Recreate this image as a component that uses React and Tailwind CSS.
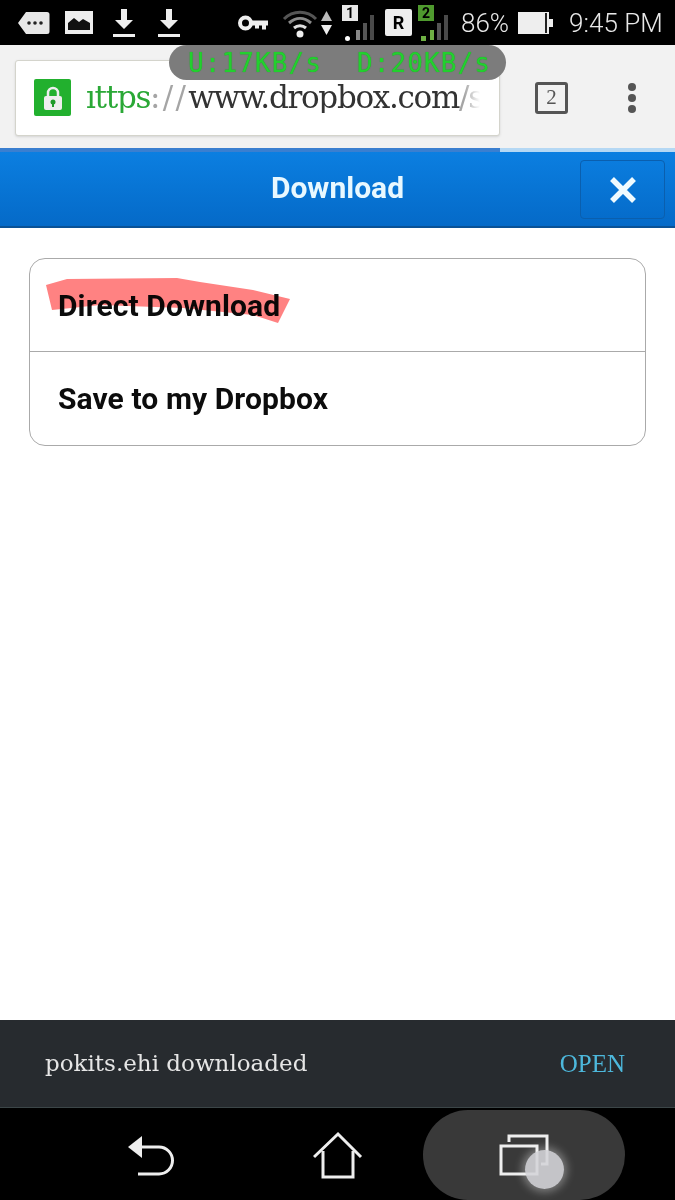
import React from "react";

function Bars({ tint }) {
    return (
        <svg width="20" height="30" viewBox="0 0 20 30">
            <rect x="0" y="17" width="4" height="10" fill={tint} />
            <rect x="7" y="10" width="4" height="17" fill="#555" />
            <rect x="14" y="2" width="4" height="25" fill="#4a4a4a" />
        </svg>
    );
}

function StatusBar() {
    return (
        <div className="h-[45px] bg-black flex items-center shrink-0 text-[#e8e8e8] font-['Roboto',sans-serif]">
            {/* notification bubble */}
            <svg className="ml-[18px]" width="32" height="24" viewBox="0 0 32 24">
                <path d="M8 1h21a2.500 2.500 0 0 1 2.500 2.500v17a2.500 2.500 0 0 1-2.500 2.500H8L0 12z" fill="#e8e8e8" />
                <circle cx="11" cy="12" r="1.800" fill="#222" />
                <circle cx="17" cy="12" r="1.800" fill="#222" />
                <circle cx="23" cy="12" r="1.800" fill="#222" />
            </svg>
            {/* picture */}
            <svg className="ml-[15px]" width="28" height="23" viewBox="0 0 28 23">
                <rect width="28" height="23" fill="#eee" />
                <path d="M3 19V12l6-5 5 4 4-3 7 4v7z" fill="#111" />
            </svg>
            <DownloadIcon className="ml-5" />
            <DownloadIcon className="ml-[23px]" />
            {/* key */}
            <svg className="ml-[58px]" width="30" height="16" viewBox="0 0 30 16">
                <circle cx="7.500" cy="8" r="5.500" fill="none" stroke="#eee" strokeWidth="4" />
                <path d="M13 5.500h17v5h-2v4h-4v-4h-3v3h-4v-3h-4z" fill="#eee" />
            </svg>
            {/* wifi */}
            <svg className="ml-[14px]" width="36" height="30" viewBox="0 0 36 30">
                <path d="M2 11C11 2 25 2 34 11" fill="none" stroke="#555" strokeWidth="3" />
                <path d="M7 15C14 9 22 9 29 15" fill="none" stroke="#8a8a8a" strokeWidth="3" />
                <path d="M12 20C15.500 17 20.500 17 24 20" fill="none" stroke="#ddd" strokeWidth="3" />
                <circle cx="18" cy="26" r="3.500" fill="#eee" />
            </svg>
            {/* up down arrows */}
            <svg className="ml-[3px]" width="11" height="24" viewBox="0 0 11 24">
                <path d="M5.500 0L11 10H0z" fill="#bbb" />
                <path d="M5.500 24L0 14h11z" fill="#eee" />
            </svg>
            <div className="ml-[10px] relative w-[34px] h-[36px]">
                <div className="absolute left-0 top-0 w-4 h-[16px] bg-[#e8e8e8] text-black text-[14px] leading-[16px] font-bold text-center">1</div>
                <div className="absolute left-[14px] top-[8px]">
                    <Bars tint="#888" />
                </div>
                <div className="absolute left-[3px] top-[31px] w-[5px] h-[5px] rounded-full bg-white"></div>
            </div>
            <div className="ml-[9px] w-[27px] h-[27px] rounded-[2px] bg-[#eee] text-black text-[18px] font-bold flex items-center justify-center">R</div>
            <div className="ml-[6px] relative w-[34px] h-[36px]">
                <div className="absolute left-0 top-0 w-4 h-[16px] bg-[#4f9a2e] text-black text-[14px] leading-[16px] font-bold text-center">2</div>
                <div className="absolute left-[12px] top-[8px]">
                    <Bars tint="#6fb044" />
                </div>
                <div className="absolute left-[3px] top-[31px] w-[5px] h-[5px] bg-[#6fb044]"></div>
            </div>
            <span className="ml-[9px] text-[26px] leading-none font-light">86%</span>
            {/* battery */}
            <svg className="ml-[9px]" width="35" height="22" viewBox="0 0 35 22">
                <rect y="0" width="31" height="22" fill="#eee" />
                <rect x="27" y="1" width="2" height="20" fill="#222" />
                <rect x="31" y="7" width="4" height="8" fill="#eee" />
            </svg>
            <span className="ml-4 text-[26px] leading-none font-light">9:45 PM</span>
        </div>
    );
}

function DownloadIcon({ className }) {
    return (
        <svg className={className} width="22" height="28" viewBox="0 0 22 28">
            <path d="M8 0h6v11h6L11 20 2 11h6z" fill="#eee" />
            <rect y="25" width="22" height="3" fill="#eee" />
        </svg>
    );
}

function AddressBar() {
    return (
        <div className="h-[103px] bg-[#f2f2f2] flex items-center shrink-0 relative">
            <div className="ml-[15px] mt-[2px] w-[485px] h-[76px] bg-white border border-[#d4d4cc] rounded-[3px] shadow-sm flex items-center overflow-hidden">
                <div className="ml-[18px] w-[37px] h-[37px] rounded-[2px] bg-[#22b02e] flex items-center justify-center shrink-0">
                    <svg width="20" height="24" viewBox="0 0 20 24">
                        <path d="M5 11V7a5 5 0 0 1 10 0v4" fill="none" stroke="#eee" strokeWidth="2.500" />
                        <rect x="1" y="10" width="18" height="14" rx="2" fill="#eee" />
                        <circle cx="10" cy="16" r="2.500" fill="#1f9a2a" />
                        <rect x="9" y="17" width="2" height="4" fill="#1f9a2a" />
                    </svg>
                </div>
                <div className="ml-[15px] text-[31px] leading-none font-['DejaVu_Serif',serif] whitespace-nowrap overflow-hidden w-[394px] tracking-[-1.300px] [mask-image:linear-gradient(to_right,black_96%,transparent)]">
                    <span className="text-[#2aa836]">ıttps</span>
                    <span className="text-[#a5a5a5] tracking-[2.300px]">://</span>
                    <span className="text-[#333]">www.dropbox.com</span>
                    <span className="text-[#a5a5a5]">/s</span>
                </div>
            </div>
            <div className="ml-[35px] mt-[2px] w-[33px] h-[32px] border-[3px] border-[#555] rounded-[3px] flex items-center justify-center text-[#555] text-[21px] font-['Liberation_Serif',serif]">2</div>
            <div className="ml-[60px] mt-[2px] flex flex-col gap-[3px]">
                <div className="w-2 h-2 rounded-full bg-[#555]"></div>
                <div className="w-2 h-2 rounded-full bg-[#555]"></div>
                <div className="w-2 h-2 rounded-full bg-[#555]"></div>
            </div>
            {/* network speed overlay */}
            <div className="absolute left-[169px] top-0 w-[337px] h-[35px] rounded-full bg-[#7c7c7c] flex items-center text-[#22d02e] text-[26px] leading-none font-['DejaVu_Sans_Mono',monospace] whitespace-nowrap tracking-[1.100px] [text-shadow:0_0_1px_#1a9a22]">
                <span className="ml-[19px]">U:17KB/s</span>
                <span className="ml-[35px]">D:20KB/s</span>
            </div>
        </div>
    );
}

function Header() {
    return (
        <div className="h-[80px] shrink-0 relative border-b-2 border-[#0a5296] bg-gradient-to-b from-[#0c80e2] to-[#056ac8] flex items-center justify-center">
            <div className="absolute left-0 top-0 w-[500px] h-[4px] bg-[#3a7fd0]"></div>
            <div className="absolute left-[500px] right-0 top-0 h-[4px] bg-[#b5d8f4]"></div>
            <span className="mt-[2px] text-[#e8f8ff] text-[30px] leading-none font-bold font-['Roboto',sans-serif]">Download</span>
            <button className="absolute left-[580px] top-[12px] w-[85px] h-[59px] rounded-[4px] border border-[#0a5fae] flex items-center justify-center">
                <svg width="28" height="28" viewBox="0 0 28 28">
                    <path d="M3 3l22 22M25 3L3 25" stroke="#f0fbff" strokeWidth="5.500" />
                </svg>
            </button>
        </div>
    );
}

function OptionsCard() {
    return (
        <div className="mx-[29px] mt-[30px] border-[1.500px] border-[#aaa] rounded-[16px] font-['Roboto',sans-serif] text-[#0c0c0c] text-[30px] font-bold tracking-[0.1px]">
            <div className="relative h-[93px] flex items-center px-[28px] border-b border-[#aaa]">
                <span>Direct Download</span>
                {/* marker scribble on top of the text */}
                <svg className="absolute left-0 top-0 mix-blend-multiply" width="300" height="90" viewBox="0 0 300 90">
                    <path d="M16 26L37 20 147 19 170 23 223 31 260 40 248 64 223 56 153 49 70 46 22 51z" fill="#ff8282" />
                </svg>
            </div>
            <div className="h-[93px] flex items-center px-[28px]">Save to my Dropbox</div>
        </div>
    );
}

function Toast() {
    return (
        <div className="mt-auto h-[88px] shrink-0 bg-[#272b2f] border-b border-[#3c4648] flex items-center justify-between pl-[45px] pr-[50px]">
            <span className="text-[#e6e6e6] text-[23px] font-['DejaVu_Serif',serif]">pokits.ehi downloaded</span>
            <span className="text-[#4db8dc] text-[25px] font-['Liberation_Serif',serif]">OPEN</span>
        </div>
    );
}

function NavBar() {
    return (
        <div className="h-[92px] shrink-0 bg-black flex items-center relative">
            <svg className="ml-[128px] mt-[2px]" width="46" height="44" viewBox="0 0 46 44">
                <path d="M0 14L14 3v22z" fill="#eee" />
                <path d="M12 14h19a12.500 12.500 0 0 1 0 27H10" fill="none" stroke="#eee" strokeWidth="3" />
            </svg>
            <svg className="ml-[139px] mt-[2px]" width="50" height="48" viewBox="0 0 50 48">
                <path d="M1 26L25 3l23 23" fill="none" stroke="#eee" strokeWidth="3" />
                <path d="M10 20v26h30V20" fill="none" stroke="#eee" strokeWidth="3" />
            </svg>
            <div className="ml-[60px] mt-[2px] w-[202px] h-[90px] rounded-[45px] bg-[#393939] flex items-center justify-center">
                <svg width="50" height="42" viewBox="0 0 50 42">
                    <path d="M10 8V2h38v28h-6" fill="none" stroke="#eee" strokeWidth="3" />
                    <rect x="2" y="12" width="36" height="28" fill="none" stroke="#eee" strokeWidth="3" />
                </svg>
            </div>
            {/* touch indicator */}
            <div className="absolute left-[525px] top-[42px] w-[39px] h-[39px] rounded-full bg-[#d4d4d8]/90 shadow-[0_0_8px_3px_rgba(255,255,255,0.35)]"></div>
        </div>
    );
}

export default function App() {
    return (
        <div className="w-[675px] h-[1200px] bg-white flex flex-col overflow-hidden">
            <StatusBar />
            <AddressBar />
            <Header />
            <OptionsCard />
            <Toast />
            <NavBar />
        </div>
    );
}
